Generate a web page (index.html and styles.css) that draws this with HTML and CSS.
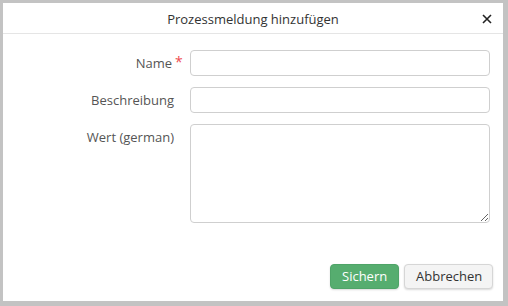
FILE: index.html
```html
<!DOCTYPE html>
<html lang="de">
<head>
<meta charset="utf-8">
<title>Prozessmeldung hinzufügen</title>
<link rel="stylesheet" href="styles.css">
</head>
<body>
<div class="modal">
  <div class="modal-header">
    <span class="modal-title">Prozessmeldung hinzufügen</span>
    <button class="close" type="button" aria-label="Schließen">
      <svg width="10" height="10" viewBox="0 0 10 10"><path d="M1 1L9 9M9 1L1 9" stroke="#222" stroke-width="1.6" fill="none"/></svg>
    </button>
  </div>
  <div class="modal-body">
    <div class="form-row">
      <label class="form-label">Name<span class="req">*</span></label>
      <input class="form-input" type="text">
    </div>
    <div class="form-row">
      <label class="form-label">Beschreibung</label>
      <input class="form-input" type="text">
    </div>
    <div class="form-row form-row-top">
      <label class="form-label">Wert (german)</label>
      <textarea class="form-textarea"></textarea>
    </div>
  </div>
  <div class="modal-footer">
    <button class="btn btn-primary" type="button">Sichern</button>
    <button class="btn btn-default" type="button">Abbrechen</button>
  </div>
</div>
</body>
</html>
```

FILE: styles.css
```css
html, body {
  margin: 0;
  padding: 0;
}
body {
  background: #c3c3c3;
  padding: 3px 5px 5px 3px;
  font-family: "Open Sans", "Liberation Sans", sans-serif;
  font-size: 13px;
  color: #333;
}
.modal {
  width: 500px;
  height: 298px;
  background: #fff;
  display: flex;
  flex-direction: column;
  box-sizing: border-box;
}
.modal-header {
  position: relative;
  height: 31px;
  border-bottom: 1px solid #e5e5e5;
  display: flex;
  align-items: center;
  justify-content: center;
  box-sizing: border-box;
}
.modal-title {
  font-size: 13px;
  color: #333;
  line-height: 18px;
  margin-top: 1px;
}
.close {
  position: absolute;
  right: 10px;
  top: 10px;
  width: 12px;
  height: 12px;
  padding: 0;
  border: 0;
  background: transparent;
  display: flex;
  align-items: center;
  justify-content: center;
}
.modal-body {
  padding-top: 16px;
  display: flex;
  flex-direction: column;
  gap: 11px;
}
.form-row {
  display: grid;
  grid-template-columns: 171px 300px;
  column-gap: 16px;
  align-items: center;
}
.form-row-top {
  align-items: start;
}
.form-row-top .form-label {
  padding-top: 4px;
}
.form-label {
  position: relative;
  text-align: right;
  color: #555;
  line-height: 18px;
}
.req {
  position: absolute;
  left: 100%;
  top: -1px;
  font-size: 14px;
  color: #ee4b50;
}
.form-row:first-child .form-label {
  padding-right: 2px;
}
.form-row:first-child .req {
  margin-left: 1px;
}
.form-input,
.form-textarea {
  box-sizing: border-box;
  width: 300px;
  border: 1px solid #cfcfcf;
  border-radius: 4px;
  font-family: inherit;
  font-size: 13px;
  margin: 0;
  background: #fff;
}
.form-input {
  height: 26px;
}
.form-textarea {
  height: 99px;
  resize: vertical;
}
.modal-footer {
  margin-top: auto;
  display: flex;
  justify-content: flex-end;
  gap: 5px;
  padding: 0 10px 12px 0;
}
.btn {
  font-family: inherit;
  font-size: 13px;
  height: 25px;
  padding: 0 11px;
  border-radius: 4px;
  line-height: 23px;
  box-sizing: border-box;
}
.btn-primary {
  width: 69px;
  background: #56ad6f;
  border: 1px solid #4fa468;
  color: #fff;
  box-shadow: 0 1px 2px rgba(0,0,0,0.15);
}
.btn-default {
  width: 89px;
  background: #f4f4f4;
  border: 1px solid #d6d6d6;
  color: #333;
  box-shadow: 0 1px 2px rgba(0,0,0,0.15);
}
```
